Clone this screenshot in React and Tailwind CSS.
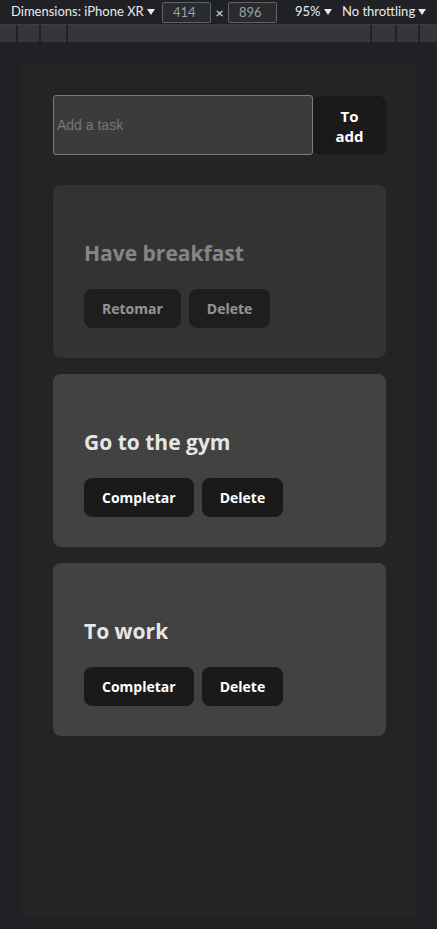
import React from "react";

const font = { fontFamily: '"Open Sans", "Noto Sans", sans-serif' };

function Tri() {
  return (
    <svg width="8" height="6" viewBox="0 0 8 6" className="ml-[3px] shrink-0">
      <path d="M0 0 L8 0 L4 6 Z" fill="#e8eaed" />
    </svg>
  );
}

function Card({ title, done }) {
  return (
    <div className={`rounded-lg bg-[#424242] pl-[31px] pt-[53px] pb-[30px] ${done ? "opacity-50" : ""}`}>
      <h2 className="text-[21px] leading-[30px] font-bold text-[#e6e6e6]" style={font}>{title}</h2>
      <div className="flex gap-[8px] mt-[21px]">
        <button className="h-[39px] px-[18px] rounded-lg bg-[#1a1a1a] text-white text-[14px] font-bold" style={font}>
          {done ? "Retomar" : "Completar"}
        </button>
        <button className="h-[39px] px-[18px] rounded-lg bg-[#1a1a1a] text-white text-[14px] font-bold" style={font}>
          Delete
        </button>
      </div>
    </div>
  );
}

export default function App() {
  return (
    <div className="w-[437px] h-[929px] bg-[#202124] flex flex-col overflow-hidden">
      <div className="h-[25px] flex items-center whitespace-nowrap text-[13px] text-[#e8eaed] border-b border-[#3c3c3c]" style={{ fontFamily: 'Lato, "Noto Sans", sans-serif' }}>
        <span className="ml-[11px] w-[151px] flex items-center">Dimensions: iPhone XR<Tri /></span>
        <div className="w-[49px] h-[21px] border border-[#5f6368] bg-[#2a2b2e] rounded-[2px] text-[#9aa0a6] pl-[10px] leading-[19px]">414</div>
        <span className="w-[17px] text-center text-[14px]">×</span>
        <div className="w-[49px] h-[21px] border border-[#5f6368] bg-[#2a2b2e] rounded-[2px] text-[#9aa0a6] pl-[10px] leading-[19px]">896</div>
        <span className="ml-[18px] w-[47px] flex items-center">95%<Tri /></span>
        <span className="flex items-center">No throttling<Tri /></span>
      </div>
      <div className="h-[17px] bg-[#35363a] flex">
        <div className="w-[18px] border-r-2 border-[#202124]" />
        <div className="w-[23px] border-r-2 border-[#202124]" />
        <div className="w-[27px] border-r-2 border-[#202124]" />
        <div className="flex-1 border-r-2 border-[#202124]" />
        <div className="w-[25px] border-r-2 border-[#202124]" />
        <div className="w-[23px] border-r-2 border-[#202124]" />
        <div className="w-[17px]" />
      </div>
      <div className="flex-1 pt-[22px] pb-[12px] pl-[22px] pr-[20px]">
        <div className="h-full bg-[#242424] pt-[31px] px-[31px]">
          <div className="flex h-[60px]">
            <input
              placeholder="Add a task"
              className="w-[260px] h-[60px] bg-[#3b3b3b] border border-[#7a7a7a] rounded-[3px] px-[3px] text-[14px] text-white placeholder:text-[#777]"
              style={{ fontFamily: '"Liberation Sans", Arial, sans-serif' }}
            />
            <button className="w-[73px] h-[59px] mt-[1px] rounded-lg bg-[#1a1a1a] text-white text-[15px] font-bold leading-[20px]" style={font}>
              To<br />add
            </button>
          </div>
          <div className="flex flex-col gap-[16px] mt-[30px]">
            <Card title="Have breakfast" done />
            <Card title="Go to the gym" />
            <Card title="To work" />
          </div>
        </div>
      </div>
    </div>
  );
}
